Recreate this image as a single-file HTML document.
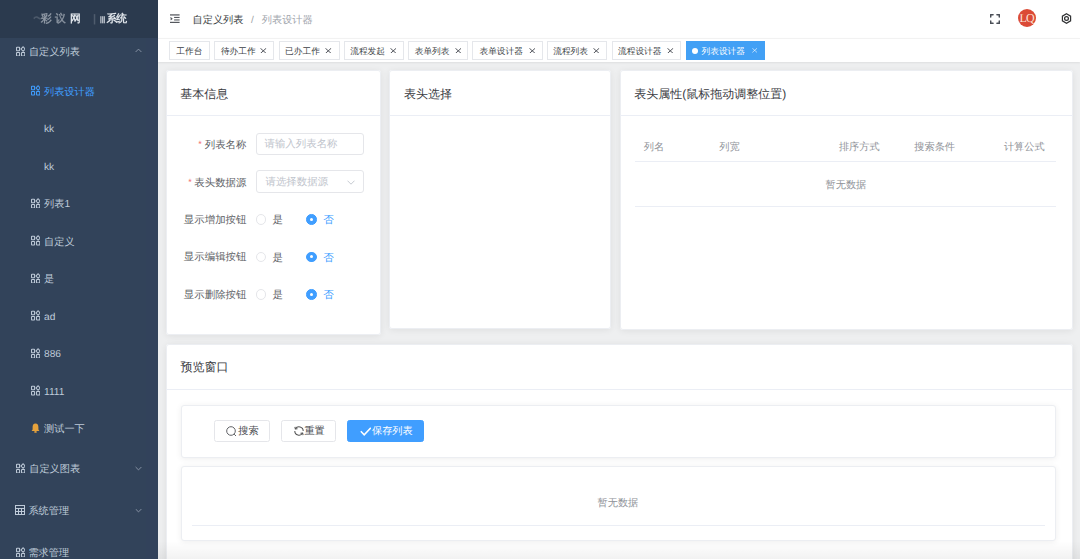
<!DOCTYPE html>
<html><head><meta charset="utf-8">
<style>
*{box-sizing:border-box;margin:0;padding:0}
html,body{width:1080px;height:559px;overflow:hidden;background:#eeeff0;font-family:"Liberation Sans",sans-serif;text-rendering:geometricPrecision}
.abs{position:absolute}
#side{position:absolute;left:0;top:0;width:158px;height:559px;background:#32435a;overflow:hidden}
#logo{position:absolute;left:0;top:0;width:158px;height:37.5px;background:#2b3a4e;z-index:2}
.lg{top:13px;font-size:10.8px;font-weight:bold;color:#dfe4ea;filter:blur(0.5px);line-height:12px;white-space:nowrap}
.mt{margin-top:2px;font-weight:500;position:absolute;font-size:10.2px;line-height:12px;white-space:nowrap;color:#bfcbd9}
#hdr{position:absolute;left:158px;top:0;width:922px;height:37.5px;background:#fff;box-shadow:0 1px 3px rgba(0,21,41,.08)}
#tags{position:absolute;left:158px;top:37.5px;width:922px;height:24px;background:#fff;box-shadow:0 1px 2px 0 rgba(0,0,0,.07),inset 0 1px 0 #f2f2f2}
.bc{margin-top:2px;font-weight:500;position:absolute;top:13px;font-size:10.2px;line-height:12px;white-space:nowrap}
.tag.on{background:#42a0f5;border-color:#42a0f5;color:#fff}
.tag{position:absolute;top:3.8px;height:18.8px;border:1px solid #e5e7eb;background:#fff;color:#3c3f46;font-size:9px;white-space:nowrap}
.tag .tt{font-weight:500;position:absolute;top:2.3px;line-height:12px;font-size:8.7px}
.tag .dot{position:absolute;top:5.6px;width:6px;height:6px;border-radius:50%;background:#fff}
.card{position:absolute;background:#fff;border-radius:3px;box-shadow:inset 0 0 0 1px #eceef2,0 1px 7px 0 rgba(0,0,0,.07)}
.chb{position:absolute;left:0;right:0;height:1px;background:#ebeef5}
.ct{font-weight:500;position:absolute;font-size:12px;color:#3a3b3f;line-height:14px;white-space:nowrap}
.lbl{margin-top:2.3px;font-weight:500;position:absolute;font-size:10.45px;color:#606266;line-height:12px;white-space:nowrap}
.star{font-weight:500;position:absolute;font-size:9px;color:#f56c6c;line-height:12px}
.inp{position:absolute;border:1px solid #e5e6ea;border-radius:3px;background:#fff}
.ph{margin-top:1px;font-weight:500;position:absolute;font-size:10.45px;color:#c0c4cc;line-height:12px;white-space:nowrap}
.radio{position:absolute;width:10.6px;height:10.6px;border-radius:50%;border:1px solid #e5e6ea;background:#fff}
.radio.on{border-color:#409eff;background:#409eff}
.radio.on:after{content:"";position:absolute;left:50%;top:50%;width:3.2px;height:3.2px;margin:-1.6px 0 0 -1.6px;border-radius:50%;background:#fff}
.rt{margin-top:1.5px;font-weight:500;position:absolute;font-size:10.5px;line-height:12px;color:#606266}
.rt.on{color:#409eff}
.th{margin-top:1px;font-weight:500;position:absolute;font-size:10.2px;line-height:12px;color:#909399;white-space:nowrap}
.empty{margin-top:1px;font-weight:500;position:absolute;font-size:10.2px;line-height:12px;color:#909399;white-space:nowrap}
.tline{position:absolute;height:1px;background:#ebeef5}
.icard{position:absolute;border:1px solid #eceef2;border-radius:3px;background:#fff;box-shadow:0 1px 6px 0 rgba(0,0,0,.07)}
.btn{position:absolute;height:22.8px;border:1px solid #e5e6ea;border-radius:2.5px;background:#fff;color:#4a4c51;white-space:nowrap}
.btn.pri{background:#409eff;border-color:#409eff;color:#fff}
.bt{margin-top:1px;font-weight:500;position:absolute;top:4.6px;font-size:10.2px;line-height:12px}
.fade{position:absolute;left:0;right:0;top:541px;height:18px;background:linear-gradient(rgba(0,0,0,0),rgba(0,0,0,.05))}

</style></head><body>
<div id="side">
<div id="logo"><div class="abs lg" style="left:33px;width:9px;opacity:.18">〜</div><div class="abs lg" style="left:41px;opacity:.55">彩</div><div class="abs lg" style="left:55px;opacity:.5">议</div><div class="abs lg" style="left:70px;opacity:1">网</div><div class="abs lg" style="left:93px;opacity:.2;width:4px;overflow:hidden">|</div><div class="abs lg" style="left:99.5px;opacity:.75;font-size:9px;top:14px">Ⅲ</div><div class="abs lg" style="left:106.5px;opacity:1;letter-spacing:-1px">系统</div></div>
<svg class="abs" style="left:15.6px;top:45.5px" width="9.8" height="10.6" viewBox="0 0 10 11" preserveAspectRatio="none"><g fill="none" stroke="#bfcbd9" stroke-width="1.05"><rect x="0.55" y="1.35" width="3.1" height="3.6" rx="0.5"/><path d="M7.25 0.75 L9.45 3.15 L7.25 5.55 L5.05 3.15 Z"/><rect x="0.55" y="6.75" width="3.1" height="3.6" rx="0.5"/><rect x="5.65" y="6.75" width="3.3" height="3.6" rx="0.5"/></g></svg>
<div class="mt" style="left:28.9px;top:45px;color:#bfcbd9">自定义列表</div>
<svg class="abs" style="left:135px;top:48px" width="7" height="5" viewBox="0 0 7 5"><path d="M0.6 4 L3.5 1.1 L6.4 4" fill="none" stroke="#8e9aab" stroke-width="0.9"/></svg>
<svg class="abs" style="left:30.5px;top:85.25px" width="9.8" height="10.6" viewBox="0 0 10 11" preserveAspectRatio="none"><g fill="none" stroke="#409eff" stroke-width="1.05"><rect x="0.55" y="1.35" width="3.1" height="3.6" rx="0.5"/><path d="M7.25 0.75 L9.45 3.15 L7.25 5.55 L5.05 3.15 Z"/><rect x="0.55" y="6.75" width="3.1" height="3.6" rx="0.5"/><rect x="5.65" y="6.75" width="3.3" height="3.6" rx="0.5"/></g></svg>
<div class="mt" style="left:44px;top:84.75px;color:#409eff">列表设计器</div>
<div class="mt" style="left:44px;top:122.25px;color:#bfcbd9">kk</div>
<div class="mt" style="left:44px;top:159.75px;color:#bfcbd9">kk</div>
<svg class="abs" style="left:30.5px;top:197.75px" width="9.8" height="10.6" viewBox="0 0 10 11" preserveAspectRatio="none"><g fill="none" stroke="#bfcbd9" stroke-width="1.05"><rect x="0.55" y="1.35" width="3.1" height="3.6" rx="0.5"/><path d="M7.25 0.75 L9.45 3.15 L7.25 5.55 L5.05 3.15 Z"/><rect x="0.55" y="6.75" width="3.1" height="3.6" rx="0.5"/><rect x="5.65" y="6.75" width="3.3" height="3.6" rx="0.5"/></g></svg>
<div class="mt" style="left:44px;top:197.25px;color:#bfcbd9">列表1</div>
<svg class="abs" style="left:30.5px;top:235.25px" width="9.8" height="10.6" viewBox="0 0 10 11" preserveAspectRatio="none"><g fill="none" stroke="#bfcbd9" stroke-width="1.05"><rect x="0.55" y="1.35" width="3.1" height="3.6" rx="0.5"/><path d="M7.25 0.75 L9.45 3.15 L7.25 5.55 L5.05 3.15 Z"/><rect x="0.55" y="6.75" width="3.1" height="3.6" rx="0.5"/><rect x="5.65" y="6.75" width="3.3" height="3.6" rx="0.5"/></g></svg>
<div class="mt" style="left:44px;top:234.75px;color:#bfcbd9">自定义</div>
<svg class="abs" style="left:30.5px;top:272.75px" width="9.8" height="10.6" viewBox="0 0 10 11" preserveAspectRatio="none"><g fill="none" stroke="#bfcbd9" stroke-width="1.05"><rect x="0.55" y="1.35" width="3.1" height="3.6" rx="0.5"/><path d="M7.25 0.75 L9.45 3.15 L7.25 5.55 L5.05 3.15 Z"/><rect x="0.55" y="6.75" width="3.1" height="3.6" rx="0.5"/><rect x="5.65" y="6.75" width="3.3" height="3.6" rx="0.5"/></g></svg>
<div class="mt" style="left:44px;top:272.25px;color:#bfcbd9">是</div>
<svg class="abs" style="left:30.5px;top:310.25px" width="9.8" height="10.6" viewBox="0 0 10 11" preserveAspectRatio="none"><g fill="none" stroke="#bfcbd9" stroke-width="1.05"><rect x="0.55" y="1.35" width="3.1" height="3.6" rx="0.5"/><path d="M7.25 0.75 L9.45 3.15 L7.25 5.55 L5.05 3.15 Z"/><rect x="0.55" y="6.75" width="3.1" height="3.6" rx="0.5"/><rect x="5.65" y="6.75" width="3.3" height="3.6" rx="0.5"/></g></svg>
<div class="mt" style="left:44px;top:309.75px;color:#bfcbd9">ad</div>
<svg class="abs" style="left:30.5px;top:347.75px" width="9.8" height="10.6" viewBox="0 0 10 11" preserveAspectRatio="none"><g fill="none" stroke="#bfcbd9" stroke-width="1.05"><rect x="0.55" y="1.35" width="3.1" height="3.6" rx="0.5"/><path d="M7.25 0.75 L9.45 3.15 L7.25 5.55 L5.05 3.15 Z"/><rect x="0.55" y="6.75" width="3.1" height="3.6" rx="0.5"/><rect x="5.65" y="6.75" width="3.3" height="3.6" rx="0.5"/></g></svg>
<div class="mt" style="left:44px;top:347.25px;color:#bfcbd9">886</div>
<svg class="abs" style="left:30.5px;top:385.25px" width="9.8" height="10.6" viewBox="0 0 10 11" preserveAspectRatio="none"><g fill="none" stroke="#bfcbd9" stroke-width="1.05"><rect x="0.55" y="1.35" width="3.1" height="3.6" rx="0.5"/><path d="M7.25 0.75 L9.45 3.15 L7.25 5.55 L5.05 3.15 Z"/><rect x="0.55" y="6.75" width="3.1" height="3.6" rx="0.5"/><rect x="5.65" y="6.75" width="3.3" height="3.6" rx="0.5"/></g></svg>
<div class="mt" style="left:44px;top:384.75px;color:#bfcbd9">1111</div>
<svg class="abs" style="left:30.5px;top:423.25px" width="9" height="10" viewBox="0 0 9 10"><path d="M4.5 0.6 C2.4 0.6 1.6 2.3 1.6 4.2 L1.6 6.6 L0.6 7.9 L8.4 7.9 L7.4 6.6 L7.4 4.2 C7.4 2.3 6.6 0.6 4.5 0.6 Z" fill="#e6a23c"/><ellipse cx="4.5" cy="8.9" rx="1.3" ry="0.9" fill="#e6a23c"/></svg>
<div class="mt" style="left:44px;top:422.25px;color:#bfcbd9">测试一下</div>
<svg class="abs" style="left:15.6px;top:462.5px" width="9.8" height="10.6" viewBox="0 0 10 11" preserveAspectRatio="none"><g fill="none" stroke="#bfcbd9" stroke-width="1.05"><rect x="0.55" y="1.35" width="3.1" height="3.6" rx="0.5"/><path d="M7.25 0.75 L9.45 3.15 L7.25 5.55 L5.05 3.15 Z"/><rect x="0.55" y="6.75" width="3.1" height="3.6" rx="0.5"/><rect x="5.65" y="6.75" width="3.3" height="3.6" rx="0.5"/></g></svg>
<div class="mt" style="left:29.2px;top:462px;color:#bfcbd9">自定义图表</div>
<svg class="abs" style="left:135px;top:465.5px" width="7" height="5" viewBox="0 0 7 5"><path d="M0.6 1 L3.5 3.9 L6.4 1" fill="none" stroke="#8e9aab" stroke-width="0.9"/></svg>
<svg class="abs" style="left:15.2px;top:505px" width="10" height="10" viewBox="0 0 10 10"><g fill="none" stroke="#bfcbd9" stroke-width="1"><rect x="0.5" y="0.5" width="9" height="9"/><line x1="0.5" y1="3.5" x2="9.5" y2="3.5"/><line x1="0.5" y1="6.5" x2="9.5" y2="6.5"/><line x1="3.5" y1="3.5" x2="3.5" y2="9.5"/><line x1="6.5" y1="3.5" x2="6.5" y2="9.5"/></g></svg>
<div class="mt" style="left:28.4px;top:504px;color:#bfcbd9">系统管理</div>
<svg class="abs" style="left:135px;top:507.5px" width="7" height="5" viewBox="0 0 7 5"><path d="M0.6 1 L3.5 3.9 L6.4 1" fill="none" stroke="#8e9aab" stroke-width="0.9"/></svg>
<svg class="abs" style="left:15.6px;top:546.5px" width="9.8" height="10.6" viewBox="0 0 10 11" preserveAspectRatio="none"><g fill="none" stroke="#bfcbd9" stroke-width="1.05"><rect x="0.55" y="1.35" width="3.1" height="3.6" rx="0.5"/><path d="M7.25 0.75 L9.45 3.15 L7.25 5.55 L5.05 3.15 Z"/><rect x="0.55" y="6.75" width="3.1" height="3.6" rx="0.5"/><rect x="5.65" y="6.75" width="3.3" height="3.6" rx="0.5"/></g></svg>
<div class="mt" style="left:28.4px;top:546px;color:#bfcbd9">需求管理</div>
<div class="abs" style="left:146px;top:37.5px;width:11px;height:522px;background:rgba(60,50,110,.05)"></div>
</div>
<div id="hdr"><svg class="abs" style="left:12.2px;top:14.3px" width="9.6" height="9" viewBox="0 0 9.6 9"><g fill="#55585e"><rect x="0" y="0.3" width="9.6" height="1.25"/><rect x="4.1" y="2.9" width="5.5" height="1.1"/><rect x="4.1" y="5.4" width="5.5" height="1.1"/><rect x="0" y="7.8" width="9.6" height="1.25"/><path d="M0.6 3.3 Q0.6 2.9 1 3.2 L2.5 4.4 Q2.8 4.7 2.5 5 L1 6.2 Q0.6 6.5 0.6 6.1 Z"/></g></svg>
<div class="bc" style="left:34.5px;color:#3d3f44">自定义列表</div>
<div class="bc" style="left:93px;color:#a0a2a6">/</div>
<div class="bc" style="left:103.8px;color:#a2a6ad">列表设计器</div>
<svg class="abs" style="left:832px;top:13.8px" width="10" height="10" viewBox="0 0 10 10"><g fill="none" stroke="#4a4e56" stroke-width="1.5" stroke-linecap="round" stroke-linejoin="round"><path d="M0.7 3 V0.7 H3"/><path d="M7 0.7 H9.3 V3"/><path d="M9.3 7 V9.3 H7"/><path d="M3 9.3 H0.7 V7"/></g></svg>
<div class="abs" style="left:859.8px;top:9.4px;width:18px;height:18px;border-radius:50%;background:#db4a36;overflow:hidden"><div class="abs" style="left:0px;top:2.5px;width:18px;text-align:center;font-family:&quot;Liberation Serif&quot;,serif;font-size:12px;line-height:13px;color:#fbe3d6;letter-spacing:-0.8px">LQ</div></div>
<svg class="abs" style="left:902.5px;top:13px" width="11" height="11" viewBox="0 0 11 11"><path d="M5.5 0.8 L9.6 3.15 L9.6 7.85 L5.5 10.2 L1.4 7.85 L1.4 3.15 Z" fill="none" stroke="#303133" stroke-width="1.2"/><circle cx="5.5" cy="5.5" r="1.9" fill="none" stroke="#303133" stroke-width="1.25"/></svg></div>
<div id="tags"><div class="tag" style="left:11.0px;width:40.5px"><span class="tt" style="left:6.3px">工作台</span></div>
<div class="tag" style="left:56.0px;width:59.5px"><span class="tt" style="left:5.9px">待办工作</span><svg class="abs" style="left:45.0px;top:5.3px" width="6.6" height="5.7" viewBox="0 0 10 8.7"><path d="M0.6 0.4 L9.4 8.3 M9.4 0.4 L0.6 8.3" stroke="#4a4d55" stroke-width="1.45" fill="none"/></svg></div>
<div class="tag" style="left:121.0px;width:60.5px"><span class="tt" style="left:5.1px">已办工作</span><svg class="abs" style="left:45.3px;top:5.3px" width="6.6" height="5.7" viewBox="0 0 10 8.7"><path d="M0.6 0.4 L9.4 8.3 M9.4 0.4 L0.6 8.3" stroke="#4a4d55" stroke-width="1.45" fill="none"/></svg></div>
<div class="tag" style="left:185.6px;width:60.1px"><span class="tt" style="left:5.6px">流程发起</span><svg class="abs" style="left:45.3px;top:5.3px" width="6.6" height="5.7" viewBox="0 0 10 8.7"><path d="M0.6 0.4 L9.4 8.3 M9.4 0.4 L0.6 8.3" stroke="#4a4d55" stroke-width="1.45" fill="none"/></svg></div>
<div class="tag" style="left:250.3px;width:59.3px"><span class="tt" style="left:5.4px">表单列表</span><svg class="abs" style="left:45.3px;top:5.3px" width="6.6" height="5.7" viewBox="0 0 10 8.7"><path d="M0.6 0.4 L9.4 8.3 M9.4 0.4 L0.6 8.3" stroke="#4a4d55" stroke-width="1.45" fill="none"/></svg></div>
<div class="tag" style="left:314.2px;width:70.4px"><span class="tt" style="left:6.3px">表单设计器</span><svg class="abs" style="left:55.5px;top:5.3px" width="6.6" height="5.7" viewBox="0 0 10 8.7"><path d="M0.6 0.4 L9.4 8.3 M9.4 0.4 L0.6 8.3" stroke="#4a4d55" stroke-width="1.45" fill="none"/></svg></div>
<div class="tag" style="left:389.2px;width:60.2px"><span class="tt" style="left:5.0px">流程列表</span><svg class="abs" style="left:45.3px;top:5.3px" width="6.6" height="5.7" viewBox="0 0 10 8.7"><path d="M0.6 0.4 L9.4 8.3 M9.4 0.4 L0.6 8.3" stroke="#4a4d55" stroke-width="1.45" fill="none"/></svg></div>
<div class="tag" style="left:454.0px;width:68.5px"><span class="tt" style="left:5.0px">流程设计器</span><svg class="abs" style="left:54.0px;top:5.3px" width="6.6" height="5.7" viewBox="0 0 10 8.7"><path d="M0.6 0.4 L9.4 8.3 M9.4 0.4 L0.6 8.3" stroke="#4a4d55" stroke-width="1.45" fill="none"/></svg></div>
<div class="tag on" style="left:528.0px;width:78.6px"><span class="dot" style="left:4.9px"></span><span class="tt" style="left:14.5px">列表设计器</span><svg class="abs" style="left:64.7px;top:6.1px" width="5.4" height="4.7" viewBox="0 0 10 8.7"><path d="M0.6 0.4 L9.4 8.3 M9.4 0.4 L0.6 8.3" stroke="#fff" stroke-width="1.1" fill="none"/></svg></div></div>
<div class="card" style="left:165.6px;top:70px;width:215.4px;height:265.0px"><div class="chb" style="top:45.2px"></div><div class="ct" style="left:14.7px;top:17.0px">基本信息</div><div class="star" style="left:32.7px;top:68.3px">*</div><div class="lbl" style="right:134.5px;top:67.3px">列表名称</div><div class="inp" style="left:90.4px;top:62.8px;width:108.4px;height:22.4px"><div class="ph" style="left:7.5px;top:3.9px">请输入列表名称</div></div><div class="star" style="left:22.6px;top:106.3px">*</div><div class="lbl" style="right:134.5px;top:105.3px">表头数据源</div><div class="inp" style="left:90.4px;top:100.4px;width:108.4px;height:22.4px"><div class="ph" style="left:8.5px;top:4.3px">请选择数据源</div><svg class="abs" style="left:90.5px;top:8.5px" width="8" height="5" viewBox="0 0 8 5"><path d="M0.5 0.7 L4 4.2 L7.5 0.7" fill="none" stroke="#c0c4cc" stroke-width="0.9"/></svg></div><div class="lbl" style="right:134.5px;top:142.6px">显示增加按钮</div><div class="radio" style="left:90.1px;top:144.1px"></div><div class="rt" style="left:106.9px;top:142.6px">是</div><div class="radio on" style="left:140.9px;top:144.1px"></div><div class="rt on" style="left:157.7px;top:142.6px">否</div><div class="lbl" style="right:134.5px;top:180.1px">显示编辑按钮</div><div class="radio" style="left:90.1px;top:181.6px"></div><div class="rt" style="left:106.9px;top:180.1px">是</div><div class="radio on" style="left:140.9px;top:181.6px"></div><div class="rt on" style="left:157.7px;top:180.1px">否</div><div class="lbl" style="right:134.5px;top:217.6px">显示删除按钮</div><div class="radio" style="left:90.1px;top:219.1px"></div><div class="rt" style="left:106.9px;top:217.6px">是</div><div class="radio on" style="left:140.9px;top:219.1px"></div><div class="rt on" style="left:157.7px;top:217.6px">否</div></div>
<div class="card" style="left:389.4px;top:70.2px;width:221.6px;height:259.3px"><div class="chb" style="top:44.9px"></div><div class="ct" style="left:14.6px;top:16.8px">表头选择</div></div>
<div class="card" style="left:620px;top:70.2px;width:452.5px;height:259.8px"><div class="chb" style="top:44.9px"></div><div class="ct" style="left:14.3px;top:16.8px">表头属性(鼠标拖动调整位置)</div><div class="tline" style="left:14.6px;top:91.0px;width:421.9px"></div><div class="tline" style="left:14.6px;top:136.0px;width:421.9px"></div><div class="th" style="left:23.7px;top:71.2px">列名</div><div class="th" style="left:99.3px;top:71.2px">列宽</div><div class="th" style="left:218.9px;top:71.2px">排序方式</div><div class="th" style="left:294.3px;top:71.2px">搜索条件</div><div class="th" style="left:383.9px;top:71.2px">计算公式</div><div class="empty" style="left:205.5px;top:108.7px">暂无数据</div></div>
<div class="card" style="left:166px;top:343.8px;width:907.0px;height:236.2px"><div class="chb" style="top:45.0px"></div><div class="ct" style="left:14.6px;top:16.2px">预览窗口</div><div class="icard" style="left:14.6px;top:61.2px;width:875.9px;height:52.6px"></div><div class="icard" style="left:14.6px;top:121.8px;width:875.9px;height:75.8px"></div><div class="tline" style="left:26.0px;top:181.2px;width:853.0px"></div><div class="empty" style="left:431.5px;top:153.2px">暂无数据</div><div class="btn" style="left:47.5px;top:75.8px;width:56.5px"><svg class="abs" style="left:11.6px;top:5.3px" width="10.5" height="10.5" viewBox="0 0 10.5 10.5"><circle cx="5" cy="5" r="4.3" fill="none" stroke="#606266" stroke-width="1"/><path d="M8.1 8.1 L10 10" stroke="#606266" stroke-width="1"/></svg><span class="bt" style="left:23.8px">搜索</span></div><div class="btn" style="left:114.6px;top:75.8px;width:55.4px"><svg class="abs" style="left:12.3px;top:5.9px" width="10" height="10" viewBox="0 0 10 10"><g fill="none" stroke="#555" stroke-width="1.05"><path d="M1.36 2.9 A4.2 4.2 0 0 1 9.2 5"/><path d="M8.64 7.1 A4.2 4.2 0 0 1 0.8 5"/><path d="M0.9 0.8 L1.36 2.9 L3.5 2.7"/><path d="M9.1 9.2 L8.64 7.1 L6.5 7.3"/></g></svg><span class="bt" style="left:22.8px">重置</span></div><div class="btn pri" style="left:181.2px;top:75.8px;width:77.1px"><svg class="abs" style="left:11.5px;top:6.3px" width="11.5" height="9" viewBox="0 0 11.5 9"><path d="M0.8 4.2 L4.2 7.8 L10.8 0.8" fill="none" stroke="#fff" stroke-width="1.5"/></svg><span class="bt" style="left:23.8px">保存列表</span></div></div>
<div class="fade" style="left:158px"></div>
</body></html>
